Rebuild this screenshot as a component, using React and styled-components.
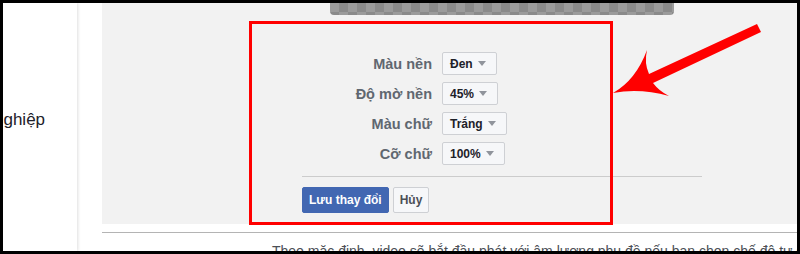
import React from "react";
import styled, { createGlobalStyle } from "styled-components";

const Global = createGlobalStyle`
  html, body { margin: 0; padding: 0; background: #000; }
  * { box-sizing: border-box; }
  body { font-family: "Liberation Sans", Arial, sans-serif; }
`;

const Page = styled.div`
  position: relative;
  width: 800px;
  height: 254px;
  padding: 3px;
  background: #000;
  overflow: hidden;
`;

const Screen = styled.div`
  display: flex;
  height: 248px;
  background: #fff;
  overflow: hidden;
`;

const Sidebar = styled.div`
  position: relative;
  z-index: 1;
  flex: none;
  width: 74px;
  padding-top: 107px;
  background: #fff;
  box-shadow: 1px 0 3px rgba(0, 0, 0, 0.13);
  overflow: hidden;
`;

const SideText = styled.div`
  margin-left: -9px;
  font-size: 17px;
  line-height: 20px;
  color: #1d2129;
  white-space: nowrap;
`;

const Main = styled.div`
  flex: 1;
  min-width: 0;
  padding-left: 25px;
  display: flex;
  flex-direction: column;
`;

const Panel = styled.div`
  height: 221px;
  flex: none;
  background: #f2f2f2;
  padding-left: 200px;
`;

const Column = styled.div`
  width: 400px;
  display: flex;
  flex-direction: column;
`;

const Preview = styled.div`
  margin-left: 28px;
  width: 344px;
  height: 12px;
  border-radius: 0 0 4px 4px;
  background-color: #9b9b9b;
  background-image: conic-gradient(#8a8a8a 25%, transparent 0 50%, #8a8a8a 0 75%, transparent 0);
  background-size: 18px 18px;
`;

const Form = styled.div`
  margin-top: 37px;
  display: grid;
  grid-template-columns: 130px auto;
  column-gap: 10px;
  row-gap: 7px;
  align-items: center;
  justify-items: start;
`;

const Label = styled.div`
  justify-self: end;
  font-size: 14.5px;
  font-weight: bold;
  color: #606770;
  white-space: nowrap;
`;

const Select = styled.div`
  display: inline-flex;
  align-items: center;
  gap: 5px;
  height: 23px;
  padding: 0 10px 0 7px;
  border: 1px solid #ced0d4;
  border-radius: 2px;
  background: #f6f7f9;
  font-size: 12px;
  font-weight: bold;
  color: #1d2129;
  white-space: nowrap;
`;

const Caret = styled.span`
  width: 0;
  height: 0;
  border-left: 4px solid transparent;
  border-right: 4px solid transparent;
  border-top: 5px solid #90949c;
`;

const Divider = styled.div`
  margin-top: 11px;
  height: 1px;
  background: #cccccc;
`;

const Buttons = styled.div`
  margin-top: 10px;
  display: flex;
  gap: 4px;
`;

const Button = styled.button`
  height: 26px;
  padding: 0 6px;
  border: 1px solid ${(p) => (p.$primary ? "#4267b2" : "#ced0d4")};
  border-radius: 2px;
  background: ${(p) => (p.$primary ? "#4267b2" : "#f6f7f9")};
  color: ${(p) => (p.$primary ? "#fff" : "#4b4f56")};
  font-family: "Liberation Sans", Arial, sans-serif;
  font-size: 12px;
  font-weight: bold;
  cursor: pointer;
`;

const Rule = styled.div`
  margin-top: 8px;
  height: 1px;
  background: #b4b4b4;
`;

const Note = styled.div`
  margin-top: 10px;
  padding-left: 170px;
  font-size: 14px;
  line-height: 16px;
  color: #4b4f56;
  white-space: nowrap;
  overflow: hidden;
`;

const Highlight = styled.div`
  position: absolute;
  left: 249px;
  top: 21px;
  width: 364px;
  height: 204px;
  border: 3px solid #ff0000;
  pointer-events: none;
`;

const ArrowLayer = styled.svg`
  position: absolute;
  left: 0;
  top: 0;
  pointer-events: none;
`;

const rows = [
  { label: "Màu nền", value: "Đen" },
  { label: "Độ mờ nền", value: "45%" },
  { label: "Màu chữ", value: "Trắng" },
  { label: "Cỡ chữ", value: "100%" },
];

export default function App() {
  return (
    <>
      <Global />
      <Page>
        <Screen>
          <Sidebar>
            <SideText>nghiệp</SideText>
          </Sidebar>
          <Main>
            <Panel>
              <Column>
                <Preview />
                <Form>
                  {rows.map((r) => (
                    <React.Fragment key={r.label}>
                      <Label>{r.label}</Label>
                      <Select>
                        {r.value}
                        <Caret />
                      </Select>
                    </React.Fragment>
                  ))}
                </Form>
                <Divider />
                <Buttons>
                  <Button $primary>Lưu thay đổi</Button>
                  <Button>Hủy</Button>
                </Buttons>
              </Column>
            </Panel>
            <Rule />
            <Note>
              Theo mặc định, video sẽ bắt đầu phát với âm lượng phụ đề nếu bạn chọn chế độ tự động phát
            </Note>
          </Main>
        </Screen>
        <Highlight />
        <ArrowLayer width="800" height="254" viewBox="0 0 800 254">
          <path
            d="M613,93 Q636,80 647,50 Q644,63 649,74 L757,24 L761,32 L653,83 Q659,91 669,96 Q640,88 613,93 Z"
            fill="#ff0000"
          />
        </ArrowLayer>
      </Page>
    </>
  );
}
